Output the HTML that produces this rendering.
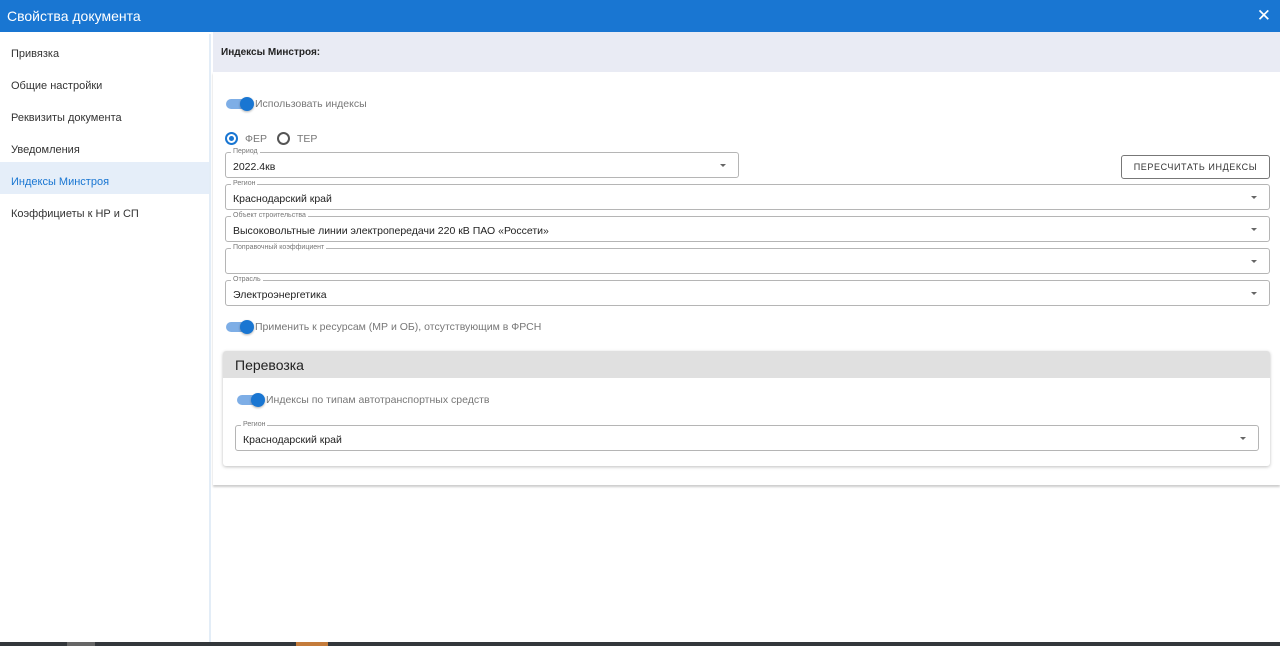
<!DOCTYPE html>
<html><head><meta charset="utf-8"><style>
*{box-sizing:border-box;margin:0;padding:0}
body{width:1280px;height:646px;overflow:hidden;background:#fff;font-family:"Liberation Sans","DejaVu Sans",sans-serif;position:relative;color:#222}
.top{position:absolute;left:0;top:0;width:1280px;height:32px;background:#1976d2;color:#fff;font-size:14px;line-height:32px;padding-left:7px}
.x{position:absolute;right:9px;top:0;font-size:17px;color:#fff}
.side{position:absolute;left:0;top:34px;width:211px;height:608px;border-right:2px solid #e3edf7}
.side div{height:32px;font-size:11px;padding-left:11px;color:#333;line-height:40px}
.side .act{background:#e5eef9;color:#1976d2}
.hdr{position:absolute;left:213px;top:32px;width:1067px;height:40px;background:#e9ebf4;font-size:10px;font-weight:bold;line-height:42px;padding-left:8px}
.panel{position:absolute;left:213px;top:72px;width:1067px;height:413px;background:#fff;box-shadow:0 2px 2px rgba(0,0,0,.2)}
.tg{position:absolute;width:26px;height:10px;border-radius:5px;background:#7eaee6}
.tg::after{content:"";position:absolute;right:-2px;top:-2px;width:14px;height:14px;border-radius:50%;background:#1976d2;box-shadow:0 1px 2px rgba(0,0,0,.3)}
.lbl{position:absolute;font-size:10.5px;color:#777}
.f{position:absolute;height:26px;border:1px solid #b5b5b5;border-radius:3px;font-size:10.5px;padding-left:7px;line-height:28px}
.f span{position:absolute;left:5px;top:-6px;font-size:7px;color:#777;background:#fff;padding:0 2px;line-height:9px}
.f i{position:absolute;right:12px;top:11px;border-left:3.5px solid transparent;border-right:3.5px solid transparent;border-top:3.5px solid #666}
.btn{position:absolute;left:1121px;top:155px;width:149px;height:24px;border:1px solid #777;border-radius:3px;font-size:9px;letter-spacing:.6px;text-align:center;line-height:23px;color:#333}
.card{position:absolute;left:223px;top:351px;width:1047px;height:115px;border-radius:3px;box-shadow:0 1px 3px rgba(0,0,0,.25);background:#fff}
.card .h{height:27px;background:#e0e0e0;font-size:14px;line-height:29px;padding-left:12px;border-radius:3px 3px 0 0}
.bot{position:absolute;left:0;top:642px;width:1280px;height:4px;background:#33373b}
</style></head><body>
<div class="top">Свойства документа<span class="x">✕</span></div>
<div class="side"><div>Привязка</div><div>Общие настройки</div><div>Реквизиты документа</div><div>Уведомления</div><div class="act">Индексы Минстроя</div><div>Коэффициеты к НР и СП</div></div>
<div class="hdr">Индексы Минстроя:</div>
<div class="panel"></div>
<div class="tg" style="left:226px;top:99px"></div><div class="lbl" style="left:255px;top:98px">Использовать индексы</div>
<div style="position:absolute;left:225px;top:132px;width:13px;height:13px;border:2px solid #1976d2;border-radius:50%"><div style="margin:2px;width:5px;height:5px;border-radius:50%;background:#1976d2"></div></div>
<div class="lbl" style="left:245px;top:133px">ФЕР</div>
<div style="position:absolute;left:277px;top:132px;width:13px;height:13px;border:2px solid #555;border-radius:50%"></div>
<div class="lbl" style="left:297px;top:133px">ТЕР</div>
<div class="f" style="left:225px;top:152px;width:514px"><span>Период</span>2022.4кв<i></i></div>
<div class="btn">ПЕРЕСЧИТАТЬ ИНДЕКСЫ</div>
<div class="f" style="left:225px;top:184px;width:1045px"><span>Регион</span>Краснодарский край<i></i></div>
<div class="f" style="left:225px;top:216px;width:1045px"><span>Объект строительства</span>Высоковольтные линии электропередачи 220 кВ ПАО «Россети»<i></i></div>
<div class="f" style="left:225px;top:248px;width:1045px"><span>Поправочный коэффициент</span><i></i></div>
<div class="f" style="left:225px;top:280px;width:1045px"><span>Отрасль</span>Электроэнергетика<i></i></div>
<div class="tg" style="left:226px;top:322px"></div><div class="lbl" style="left:255px;top:321px">Применить к ресурсам (МР и ОБ), отсутствующим в ФРСН</div>
<div class="card"><div class="h">Перевозка</div></div>
<div class="tg" style="left:237px;top:395px"></div><div class="lbl" style="left:266px;top:394px">Индексы по типам автотранспортных средств</div>
<div class="f" style="left:235px;top:425px;width:1024px"><span>Регион</span>Краснодарский край<i></i></div>
<div class="bot"><div style="position:absolute;left:67px;width:28px;height:4px;background:#666"></div><div style="position:absolute;left:296px;width:32px;height:4px;background:#c47b3a"></div></div>
</body></html>
